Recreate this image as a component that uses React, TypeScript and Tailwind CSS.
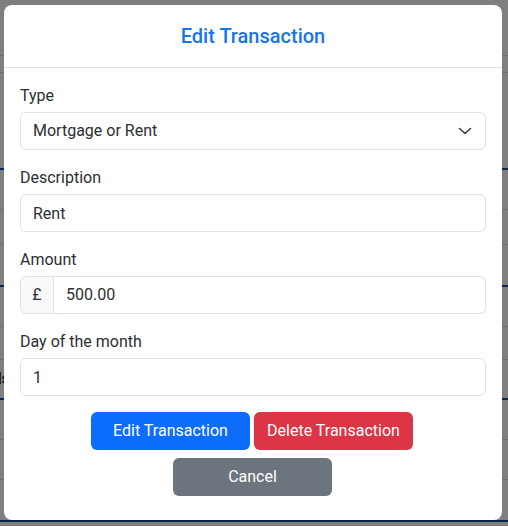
import { useState } from 'react';

const rows = [
  { h: 'h-[56px]', line: 'border-[#dddddd]', text: '' },
  { h: 'h-[17px]', line: 'border-[#dddddd]', text: '' },
  { h: 'h-[97px]', line: 'border-[#0d4fa8] border-b-2', text: '' },
  { h: 'h-[40px]', line: 'border-[#dddddd]', text: '' },
  { h: 'h-[35px]', line: 'border-[#dddddd]', text: '' },
  { h: 'h-[42px]', line: 'border-[#0d4fa8] border-b-2', text: '' },
  { h: 'h-[40px]', line: 'border-[#dddddd]', text: '' },
  { h: 'h-[33px]', line: 'border-[#dddddd]', text: '' },
  { h: 'h-[40px]', line: 'border-[#0d4fa8] border-b-2', text: 'Totals' },
  { h: 'h-[40px]', line: 'border-[#dddddd]', text: '' },
  { h: 'h-[40px]', line: 'border-[#dddddd]', text: '' },
  { h: 'h-[42px]', line: 'border-[#0d4fa8] border-b-2', text: 'Net' },
];

const Field = ({ label, children }: { label: string; children: React.ReactNode }) => (
  <div className="mb-4">
    <label className="block mb-[4px] text-base leading-6 text-[#2b2f33]">{label}</label>
    {children}
  </div>
);

const inputCls =
  'block w-full h-[38px] px-3 rounded-md border border-[#dee2e6] bg-white text-base text-[#2b2f33] outline-none';

export default function App() {
  const [type] = useState('Mortgage or Rent');

  return (
    <div className="relative w-[508px] h-[526px] overflow-hidden bg-white font-['Roboto',sans-serif]">
      {/* page behind the modal */}
      <div className="flex flex-col">
        {rows.map((r, i) => (
          <div key={i} className={`${r.h} ${r.line} border-b flex items-center -ml-[34px] text-base font-bold text-[#212529]`}>
            {r.text}
          </div>
        ))}
      </div>

      {/* backdrop */}
      <div className="absolute inset-0 bg-black/50 flex items-start pl-[4px] pt-[5px]">
        <div className="w-[498px] rounded-lg bg-white">
          <div className="h-[63px] flex items-center justify-center border-b border-[#dee2e6]">
            <h5 className="text-[20px] font-medium text-[#1a73e8]">Edit Transaction</h5>
          </div>

          <div className="px-4 pt-4 pb-6">
            <Field label="Type">
              <div className={`${inputCls} flex items-center justify-between`}>
                <span>{type}</span>
                <svg width="16" height="16" viewBox="0 0 16 16" fill="none" stroke="#343a40" strokeWidth="1.6" strokeLinecap="round" strokeLinejoin="round">
                  <path d="M2.5 5.5l5.5 5 5.5-5" />
                </svg>
              </div>
            </Field>

            <Field label="Description">
              <input className={inputCls} defaultValue="Rent" />
            </Field>

            <Field label="Amount">
              <div className="flex h-[38px]">
                <span className="w-[34px] flex items-center justify-center rounded-l-md border border-[#dee2e6] bg-[#f8f9fa] text-base text-[#2b2f33]">
                  £
                </span>
                <input
                  className="flex-1 min-w-0 px-3 rounded-r-md border border-l-0 border-[#dee2e6] text-base text-[#2b2f33] outline-none"
                  defaultValue="500.00"
                />
              </div>
            </Field>

            <Field label="Day of the month">
              <input className={inputCls} defaultValue="1" />
            </Field>

            <div className="flex justify-center gap-[4px] pr-[2px]">
              <button className="w-[159px] h-[38px] rounded-md bg-[#0d6efd] text-white text-base">Edit Transaction</button>
              <button className="w-[159px] h-[38px] rounded-md bg-[#dc3545] text-white text-base">Delete Transaction</button>
            </div>
            <div className="flex justify-center mt-2 pr-[1px]">
              <button className="w-[159px] h-[38px] rounded-md bg-[#6c757d] text-white text-base">Cancel</button>
            </div>
          </div>
        </div>
      </div>
    </div>
  );
}
